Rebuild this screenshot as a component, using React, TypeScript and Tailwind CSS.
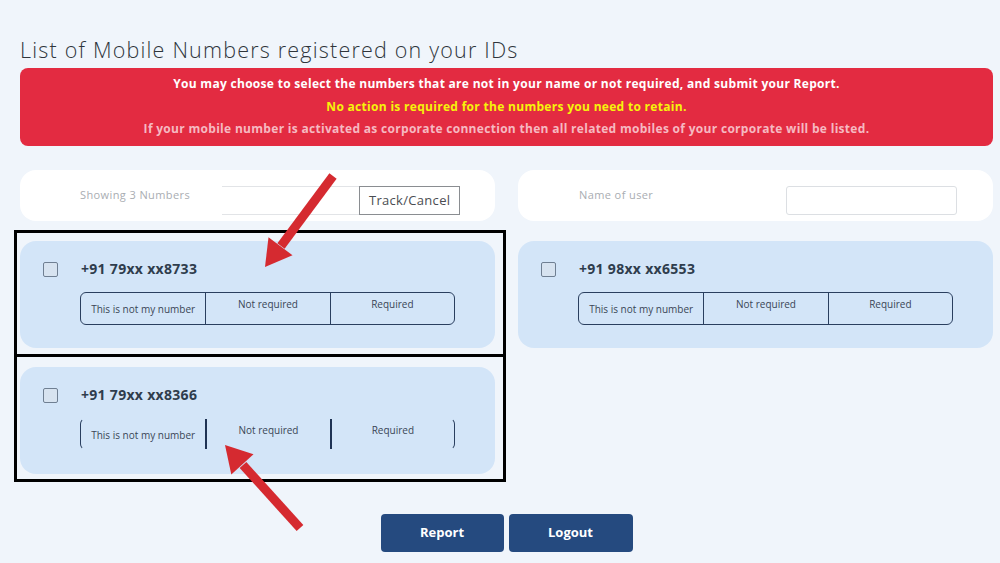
import React from "react";

const font = { fontFamily: '"Open Sans", "Liberation Sans", sans-serif' };

type Entry = { id: number; number: string; bracket?: boolean };

const leftCards: Entry[] = [
  { id: 1, number: "+91 79xx xx8733" },
  { id: 2, number: "+91 79xx xx8366", bracket: true },
];

const rightCards: Entry[] = [{ id: 3, number: "+91 98xx xx6553" }];

function Options({ bracket }: { bracket?: boolean }) {
  if (bracket) {
    return (
      <div className="mt-[15px] ml-[60px] mr-[40px] grid h-[32px] grid-cols-3 rounded-md border-x-[1.5px] border-y border-x-[#2a3f5f] border-y-transparent text-[10px] text-[#3a4656]">
        <div className="flex items-center justify-center pt-[2px]">This is not my number</div>
        <div className="flex justify-center border-l-2 border-[#1f3354] pt-[4px]">Not required</div>
        <div className="flex justify-center border-l-2 border-[#1f3354] pt-[4px]">Required</div>
      </div>
    );
  }
  return (
    <div className="mt-[15px] ml-[60px] mr-[40px] grid h-[33px] grid-cols-3 rounded-md border border-[#2a3f5f] text-[10px] text-[#3a4656]">
      <div className="flex items-center justify-center pt-[2px]">This is not my number</div>
      <div className="flex justify-center border-l border-[#2a3f5f] pt-[4px]">Not required</div>
      <div className="flex justify-center border-l border-[#2a3f5f] pt-[4px]">Required</div>
    </div>
  );
}

function NumberCard({ entry }: { entry: Entry }) {
  return (
    <div className="h-[107px] rounded-2xl bg-[#d3e5f8] pt-[20px]">
      <div className="flex items-center">
        <span className="ml-[23px] h-[15px] w-[15px] rounded-[2px] border border-[#6f7f92] bg-[#d7e3f0]" />
        <span className="ml-[23px] text-[14px] font-bold leading-[16px] tracking-[0.3px] text-[#2f3d4d]">
          {entry.number}
        </span>
      </div>
      <Options bracket={entry.bracket} />
    </div>
  );
}

export default function App() {
  return (
    <div className="relative min-h-[563px] w-[1000px] overflow-hidden bg-[#f0f5fb]" style={font}>
      <div className="pl-[20px] pr-[7px] pt-[36px]">
        <h1 className="text-[21.5px] font-light leading-[28px] tracking-[1.2px] text-[#2f353b]">
          List of Mobile Numbers registered on your IDs
        </h1>
        <div className="mt-[4px] flex h-[78px] flex-col items-center rounded-lg bg-[#e32b41] pt-[5px] text-[12px] font-bold leading-[22.5px] tracking-[0.3px]">
          <p className="text-white">
            You may choose to select the numbers that are not in your name or not required, and submit your Report.
          </p>
          <p className="text-[#f6f40a]">No action is required for the numbers you need to retain.</p>
          <p className="text-[#f6b9c1]">
            If your mobile number is activated as corporate connection then all related mobiles of your corporate will be listed.
          </p>
        </div>

        <div className="mt-[24px] grid grid-cols-2 gap-x-[23px]">
          <div className="flex flex-col">
            <div className="flex h-[51px] items-start rounded-2xl bg-white">
              <span className="ml-[60px] mt-[17px] w-[142px] text-[11px] tracking-[0.4px] text-[#a9adb2]">
                Showing 3 Numbers
              </span>
              <div className="mt-[16px] flex h-[29px]">
                <div className="w-[137px] border-y border-[#e2e4e7] bg-white" />
                <button className="w-[101px] overflow-hidden whitespace-nowrap border border-[#8a8d91] bg-white pl-[9px] text-left text-[13px] tracking-[0.3px] text-[#4a4d52]">
                  Track/Cancel
                </button>
              </div>
            </div>
            <div className="mt-[20px] flex flex-col gap-[19px]">
              {leftCards.map((c) => (
                <NumberCard key={c.id} entry={c} />
              ))}
            </div>
          </div>

          <div className="flex flex-col">
            <div className="flex h-[51px] items-start rounded-2xl bg-white">
              <span className="ml-[61px] mt-[17px] w-[207px] text-[11px] tracking-[0.4px] text-[#a9adb2]">
                Name of user
              </span>
              <div className="mt-[16px] h-[29px] w-[171px] rounded-[3px] border border-[#dcdfe3] bg-white" />
            </div>
            <div className="mt-[20px] flex flex-col gap-[19px]">
              {rightCards.map((c) => (
                <NumberCard key={c.id} entry={c} />
              ))}
            </div>
          </div>
        </div>

        <div className="mt-[40px] flex justify-center gap-[5px]">
          <button className="h-[38px] w-[123px] rounded-[4px] bg-[#254a7f] text-[13px] font-bold text-white">
            Report
          </button>
          <button className="h-[38px] w-[124px] rounded-[4px] bg-[#254a7f] text-[13px] font-bold text-white">
            Logout
          </button>
        </div>
      </div>

      {/* annotation boxes */}
      <div className="pointer-events-none absolute left-[14px] top-[230px] h-[127px] w-[492px] border-[3px] border-black" />
      <div className="pointer-events-none absolute left-[14px] top-[354px] h-[128px] w-[492px] border-[3px] border-black" />

      {/* annotation arrows */}
      <svg className="pointer-events-none absolute left-0 top-0" width="1000" height="563" viewBox="0 0 1000 563">
        <line x1="333" y1="176" x2="281" y2="246" stroke="#d52a30" strokeWidth="9" />
        <polygon points="265,267 292.5,255.2 268.5,237.2" fill="#d52a30" />
        <line x1="300" y1="528" x2="243" y2="465" stroke="#d52a30" strokeWidth="9" />
        <polygon points="225,445 253.5,454.2 231.3,474.4" fill="#d52a30" />
      </svg>
    </div>
  );
}
